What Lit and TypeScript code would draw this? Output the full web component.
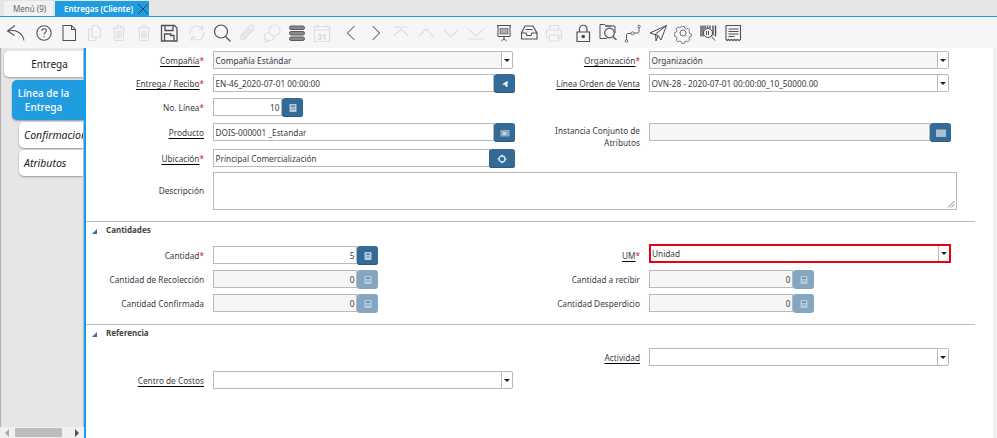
import { LitElement, html, css, svg } from "lit";
import { customElement } from "lit/decorators.js";

const ic = (c: string, body: unknown) => html`<span class="tb ${c}"><svg viewBox="0 0 24 24" width="24" height="24">${body}</svg></span>`;

const icons = {
  back: svg`<path d="M12 4.500L4.500 10l7 4.500M5 10c7-1.500 14.500 1 16 9.500"/>`,
  help: svg`<circle cx="12" cy="12" r="7.200"/><path d="M9.800 10c0-3 4.600-3 4.600-.2 0 2-2.400 1.800-2.400 3.800M12 15v1.200"/>`,
  nw: svg`<path d="M6 4.500h8.500l4 4V19.500H6zM14.500 4.500v4h4"/>`,
  copy: svg`<path d="M10 4.500h5l3.500 3.500v8H10zM10 8H6.500v11.500H14V16"/>`,
  del: svg`<path d="M7 7h10l-.8 12.500H7.800zM6 7h12M10 7V4.500h4V7M10 9.500v8M12 9.500v8M14 9.500v8"/>`,
  save: svg`<path d="M4.500 4.500h13l2.500 2.500v13H4.500zM8 4.500v5h8v-5M7.500 20v-7h7M13 14.500h4V20" stroke-width="1.300"/>`,
  refresh: svg`<path d="M5 13c-.5-5 3-8 7-8 2.500 0 4 1 5.500 2.500M17.500 4v4h-4M19 11c.5 5-3 8-7 8-2.500 0-4-1-5.500-2.500M6.500 20v-4h4"/>`,
  search: svg`<circle cx="11" cy="10.500" r="6.500" stroke-width="1.200"/><path d="M15.500 15.500l5 5" stroke-width="1.200"/>`,
  attach: svg`<path d="M18.500 8.500L10 17.500c-3 2.500-6-.5-3.500-3.500l8.500-9c2-2 5 .5 3 3l-8 8.500c-1 1-2.500-.3-1.500-1.500l7-7.500"/>`,
  chat: svg`<circle cx="14.500" cy="9.500" r="5.500"/><path d="M9 11.500c-5 0-6.500 6-2.500 7.500l-1 2 3-1.500c3 .5 5.500-1.500 5.500-4"/>`,
  menu: svg`<g fill="#8a8a8a" stroke="#5a5a5a" stroke-width="1"><rect x="4.500" y="5" width="15" height="3.500" rx="1.700"/><rect x="4.500" y="10.500" width="15" height="3.500" rx="1.700"/><rect x="4.500" y="16" width="15" height="3.500" rx="1.700"/></g>`,
  cal: svg`<path d="M4.500 5.500h15v15h-15zM4.500 9h15M8 3.500v3M16 3.500v3"/><text x="12" y="18.500" class="cal">31</text>`,
  prev: svg`<path d="M15.500 5L8.500 12l7 7"/>`,
  next: svg`<path d="M8.500 5l7 7-7 7"/>`,
  first: svg`<path d="M4.500 6h15M4.500 15L12 8l7.500 7"/>`,
  up: svg`<path d="M4.500 15.500L12 8l7.500 7.500"/>`,
  down: svg`<path d="M4.500 8.500L12 16l7.500-7.500"/>`,
  last: svg`<path d="M4.500 8L12 15l7.500-7M4.500 18h15"/>`,
  report: svg`<path d="M5 4.500h14M6 4.500V15.500h12V4.500M12 15.500v3M9.500 20l2.500-2 2.500 2" stroke-width="1"/><rect x="8" y="7.500" width="8" height="5.500" fill="#aaa" stroke-width=".6"/>`,
  archive: svg`<path d="M8 5h8l4 7v6H4.500v-6zM4.500 12H9l1 2.500h4l1-2.500h5M8.500 8.500h7" stroke-width="1.100"/>`,
  print: svg`<path d="M7.500 9V4.500h9V9M7.500 17H4.500V9h15v8h-3M7.500 14h9v6h-9z"/>`,
  lock: svg`<path d="M6 11h12.500v9.500H6z" stroke-width="1.200"/><path d="M8.500 11V8c0-5 7.500-5 7.500 0v3" stroke-width="1.200"/><circle cx="12.200" cy="15.500" r="1.300" fill="#333"/>`,
  zoom: svg`<path d="M15 5H10L8.500 3.500H4v14h7M9 5h10v7" stroke-width="1"/><circle cx="13.500" cy="12" r="4.800" stroke-width="1.200"/><path d="M17 15.500l3.500 3.500" stroke-width="1.200"/>`,
  flow: svg`<path d="M5.500 19v-5c0-1 .5-1.500 1.500-1.500h3M13 12h3c1.500 0 2-1 2-2V7" stroke-width=".9"/><circle cx="5.500" cy="20" r="1.300" stroke-width=".8"/><circle cx="11.500" cy="12.300" r="1.500" stroke-width=".8"/><circle cx="18" cy="5.500" r="1.300" stroke-width=".8"/>`,
  send: svg`<path d="M4 12L20.500 4.500 15 19l-3-4.500zM20.500 4.500L9.500 13 10 20l2-5.500" stroke-width="1"/>`,
  gear: svg`<circle cx="12" cy="12" r="3" stroke-width="1"/><path d="M10.500 4.500h3l.6 2 1.800.8 1.900-.9 2 2.100-.9 1.800.7 1.900 1.900.8v2.800l-1.900.7-.8 1.800.9 1.900-2 2-1.900-.9-1.800.8-.6 1.900h-3l-.6-1.900-1.800-.8-1.900.9-2-2 .9-1.900-.8-1.800-1.900-.7V11.600l1.900-.8.7-1.900-.9-1.800 2-2.100 1.900.9 1.800-.8z" transform="translate(1.700 1.700) scale(.86)" stroke-width="1"/>`,
  bar: svg`<path d="M5 4.500v11M7 4.500v11M9 4.500v4M11.500 4.500v3M14 4.500v3M17 4.500v10M19.500 4.500v11" stroke-width="1.400"/><circle cx="12" cy="12" r="4.500" stroke-width="1"/><path d="M10.500 10v4M12.500 10v4M15.500 15.500l3.500 4" stroke-width="1"/>`,
  doc: svg`<path d="M5 4.500h14.500v14l-1.500 1-1.500-1-1.500 1-1.500-1-1.500 1-1.500-1-1.500 1-1.500-1-1.500 1L5 18.500z" stroke-width="1.100"/><path d="M7.500 8h10M7.500 10.500h10M7.500 13h10M7.500 15.500h6" stroke-width="1"/>`,
};

const btnIcon = (k: string) => {
  if (k === "loc") return svg`<circle cx="7" cy="7" r="3" fill="none" stroke="#dfe8f0" stroke-width="1.300"/><path d="M7 2.500v2M7 9.500v2M2.500 7h2M9.500 7h2" stroke="#dfe8f0" stroke-width="1"/>`;
  if (k === "ret") return svg`<path d="M4 7.500L8 4.500h2.500L9.500 6.500V10H8L7 8z" fill="#eef3f7"/>`;
  if (k === "prod") return svg`<rect x="2.500" y="4" width="9" height="6.500" fill="#8fabc3"/><rect x="5" y="6" width="3" height="3" fill="#c9d7e3"/>`;
  if (k === "attr") return svg`<rect x="2" y="3.500" width="10" height="7.500" fill="#a8bfd2"/>`;
  return svg`<rect x="3.500" y="3" width="7" height="8" rx=".8" fill="#b9cad8"/><rect x="5" y="4.500" width="4" height="1.300" fill="#4b7ba3"/><rect x="5" y="7.500" width="4" height="1" fill="#7f9fbb"/>`;
};

@customElement("app-root")
export class AppRoot extends LitElement {
  static styles = css`
    :host { display: block; width: 997px; height: 438px; overflow: hidden; background: #fff;
      font-family: "Noto Sans", "Open Sans", sans-serif; font-size: 8.250px; color: #3b3b45; }
    * { box-sizing: border-box; }
    .tabs { height: 17px; background: #e5e5e5; border-bottom: 1px solid #1a9be0; display: flex; padding: 1px 0 0 4px; gap: 2px; }
    .tab { height: 15px; display: flex; align-items: center; font-size: 8px; white-space: nowrap; }
    .tab.menu { width: 49px; background: #f1f1f1; color: #666; padding-left: 9px; }
    .tab.on { width: 94px; background: #1f9de0; color: #fff; font-weight: 600; padding-left: 9px; justify-content: space-between; }
    .tab.on svg { display: block; }
    .toolbar { height: 31px; background: #f6f6f6; display: flex; align-items: center; padding: 0 0 0 2.500px; gap: 3.500px; }
    .grp { display: flex; }
    .tb { width: 25px; height: 24px; display: flex; justify-content: center; }
    .tb svg { fill: none; stroke: #505050; stroke-width: 1.050; overflow: visible; }
    .tb.off svg { stroke: #dedede; stroke-width: 1.200; }
    .tb.mid svg { stroke: #6a6a6a; }
    .cal { font-size: 8px; font-weight: 700; fill: #d8d8d8; stroke: none; text-anchor: middle; font-family: "Noto Sans", sans-serif; }
    .body { display: flex; height: 390px; }
    .side { width: 86px; flex: none; background: #e6e6e6; border-right: 2px solid #12a0ea; display: flex; flex-direction: column;
      box-shadow: inset 2px 0 1px -1px #aaa, inset -2px 0 1px -1px #bbb; }
    .stabs { flex: 1; display: flex; flex-direction: column; padding-top: 3px; overflow: hidden; }
    .st { background: #fff; border-radius: 5px 0 0 5px; box-shadow: 0 1px 2px #999; overflow: hidden; white-space: nowrap; }
    .st.a { margin: 0 0 0 4px; width: 79px; height: 26px; font-size: 10px; line-height: 26px; text-align: center; padding-left: 12px; color: #222; }
    .st.b { margin: 3px 0 0 12px; width: 72px; height: 40px; padding: 6px 9px 0 0; font-size: 10px; line-height: 14px; text-align: center; background: #1f9de0; color: #fff; font-weight: 500; }
    .st.c { margin: 2px 0 0 19px; width: 64px; height: 26px; font-size: 10.500px; line-height: 26px; font-style: italic; padding-left: 5px; color: #222; }
    .sbar { height: 11px; background: #f0f0f0; display: flex; align-items: center; padding-left: 15px; }
    .thumb { width: 47px; height: 9px; background: #bdbdbd; }
    .arr { width: 0; height: 0; border-style: solid; border-color: transparent; border-width: 4px; }
    .arr.l { border-right-color: #aaa; border-left-width: 0; margin-left: -10px; margin-right: 6px; }
    .arr.r { border-left-color: #555; border-right-width: 0; margin-left: 13px; }
    .main { flex: 1; display: flex; }
    .content { width: 907px; flex: none; padding-top: 3px; }
    .vbar { flex: 1; background: #f1f1f1; }
    .grid { display: grid; grid-template-columns: 118px 300px 118px 300px; column-gap: 9px; align-items: start; }
    .g1 { grid-template-rows: 18px 19px 20px 21px 18px 38px; row-gap: 5px; }
    .g2 { grid-template-rows: 19px 19px 18px; row-gap: 5px; }
    .g3 { grid-template-rows: 18px 18px; row-gap: 5px; }
    .lb { text-align: right; line-height: 20px; white-space: nowrap; }
    .lb u { text-decoration-color: #000; text-underline-offset: 1.500px; }
    .lb i { color: #e0102a; font-style: normal; }
    .lb.two { line-height: 11.500px; padding-top: 2px; }
    .lb.tall { line-height: 38px; }
    .ctl { display: flex; height: 18px; }
    .inp { flex: 1; min-width: 0; height: 18px; border: 1px solid #b9b9b9; padding: 0 1.500px; line-height: 18px; background: #fff; white-space: nowrap; overflow: hidden; color: #3b3b45; }
    .inp.ro { background: #f6f6f6; }
    .inp.num { text-align: right; }
    .sel { width: 12px; height: 18px; border: 1px solid #b9b9b9; margin-left: -1px; background: #fff; display: flex; align-items: center; justify-content: center; border-radius: 0 2px 2px 0; }
    .sel b { width: 0; height: 0; border: 3px solid transparent; border-top: 3px solid #222; border-bottom: 0; }
    .btn { height: 19px; background: #336a98; border-radius: 3px; display: flex; align-items: center; justify-content: center; width: 21px; flex: none; box-shadow: inset 0 -1px 0 #2a5a83; }
    .btn.off { background: #84a6c2; box-shadow: none; }
    .btn.wide { width: 26px; margin-left: -1px; }
    .w90 { width: 90px; }
    .w165 { width: 165px; }
    .w302 { width: 302px; }
    .ta { width: 744px; height: 38px; border: 1px solid #b9b9b9; grid-column: 2 / 5; position: relative; }
    .ta svg { position: absolute; right: 1px; bottom: 1px; }
    .sec { width: 889px; border-top: 1px solid #bdbdbd; }
    .s1 { margin-top: 11px; padding-bottom: 12px; }
    .hd { display: flex; align-items: center; gap: 9px; padding-left: 6px; font-weight: 700; font-size: 8px; color: #444; height: 14px; margin-bottom: 10px; }
    .s2 .hd { margin-bottom: 9px; }
    .tri { width: 0; height: 0; border-style: solid; border-width: 0 0 5px 5px; border-color: transparent transparent #2b6ea8 transparent; margin-top: 5px; }
    .um { border: 2px solid #e60012; width: 302px; height: 18.500px; display: flex; margin-top: -2px; }
    .um .inp { border: 0; line-height: 16px; height: 15px; padding-left: 1px; }
    .um .sel { border: 0; border-left: 1px solid #b9b9b9; height: 15px; margin: 0; width: 11px; }
  `;

  private lab(t: string, u = false, req = false, extra = "") {
    return html`<div class="lb ${extra}">${u ? html`<u>${t}</u>` : t}${req ? html`<i>*</i>` : ""}</div>`;
  }
  private sel(t: string, ro = false) {
    return html`<div class="ctl"><div class="inp ${ro ? "ro" : ""}">${t}</div><div class="sel"><b></b></div></div>`;
  }
  private bicon(k: string) {
    return html`<svg viewBox="0 0 14 14" width="14" height="14">${btnIcon(k)}</svg>`;
  }
  private txtBtn(t: string, k: string, extra = "") {
    return html`<div class="ctl w302"><div class="inp">${t}</div><div class="btn ${extra}">${this.bicon(k)}</div></div>`;
  }
  private num(v: string, ro = false, w = "w165") {
    return html`<div class="ctl ${w}"><div class="inp num ${ro ? "ro" : ""}">${v}</div><div class="btn ${ro ? "off" : ""}">${this.bicon("calc")}</div></div>`;
  }

  render() {
    const i = icons;
    return html`
      <div class="tabs">
        <div class="tab menu">Menú (9)</div>
        <div class="tab on">Entregas (Cliente)
          <svg viewBox="0 0 12 12" width="12" height="12"><path d="M1 1l10 10M11 1L1 11" stroke="#24435c" stroke-width="1" fill="none"/></svg>
        </div>
      </div>
      <div class="toolbar">
        <div class="grp">${ic("", i.back)}</div>
        <div class="grp">${ic("", i.help)}${ic("", i.nw)}${ic("off", i.copy)}${ic("off", i.del)}${ic("off", i.del)}${ic("", i.save)}</div>
        <div class="grp">${ic("off", i.refresh)}${ic("", i.search)}${ic("off", i.attach)}${ic("off", i.chat)}${ic("", i.menu)}${ic("off", i.cal)}</div>
        <div class="grp">${ic("mid", i.prev)}${ic("mid", i.next)}${ic("off", i.first)}${ic("off", i.up)}${ic("off", i.down)}${ic("off", i.last)}</div>
        <div class="grp">${ic("", i.report)}${ic("", i.archive)}${ic("off", i.print)}</div>
        <div class="grp">${ic("", i.lock)}${ic("", i.zoom)}${ic("", i.flow)}${ic("", i.send)}${ic("mid", i.gear)}${ic("", i.bar)}${ic("", i.doc)}</div>
      </div>
      <div class="body">
        <div class="side">
          <div class="stabs">
            <div class="st a">Entrega</div>
            <div class="st b">Línea de la<br />Entrega</div>
            <div class="st c">Confirmaciones</div>
            <div class="st c">Atributos</div>
          </div>
          <div class="sbar"><span class="arr l"></span><div class="thumb"></div><span class="arr r"></span></div>
        </div>
        <div class="main">
          <div class="content">
            <div class="grid g1">
              ${this.lab("Compañía", true, true)}${this.sel("Compañía Estándar", true)}
              ${this.lab("Organización", true, true)}${this.sel("Organización", true)}
              ${this.lab("Entrega / Recibo", true, true)}${this.txtBtn("EN-46_2020-07-01 00:00:00", "ret")}
              ${this.lab("Línea Orden de Venta", true)}${this.sel("OVN-28 - 2020-07-01 00:00:00_10_50000.00")}
              ${this.lab("No. Línea", false, true)}${this.num("10", false, "w90")}<div></div><div></div>
              ${this.lab("Producto", true)}${this.txtBtn("DOIS-000001 _Estandar", "prod")}
              <div class="lb two">Instancia Conjunto de<br />Atributos</div>
              <div class="ctl w302"><div class="inp ro"></div><div class="btn">${this.bicon("attr")}</div></div>
              ${this.lab("Ubicación", true, true)}${this.txtBtn("Principal Comercialización", "loc", "wide")}<div></div><div></div>
              ${this.lab("Descripción", false, false, "tall")}
              <div class="ta"><svg viewBox="0 0 8 8" width="8" height="8"><path d="M1 7.500L7.500 1M4 7.500L7.500 4" stroke="#666" stroke-width=".8"/></svg></div>
            </div>
            <div class="sec s1">
              <div class="hd"><span class="tri"></span>Cantidades</div>
              <div class="grid g2">
                ${this.lab("Cantidad", false, true)}${this.num("5")}
                ${this.lab("UM", true, true)}
                <div class="um"><div class="inp">Unidad</div><div class="sel"><b></b></div></div>
                ${this.lab("Cantidad de Recolección")}${this.num("0", true)}
                ${this.lab("Cantidad a recibir")}${this.num("0", true)}
                ${this.lab("Cantidad Confirmada")}${this.num("0", true)}
                ${this.lab("Cantidad Desperdicio")}${this.num("0", true)}
              </div>
            </div>
            <div class="sec s2">
              <div class="hd"><span class="tri"></span>Referencia</div>
              <div class="grid g3">
                <div></div><div></div>
                ${this.lab("Actividad", true)}${this.sel("")}
                ${this.lab("Centro de Costos", true)}${this.sel("")}
              </div>
            </div>
          </div>
          <div class="vbar"></div>
        </div>
      </div>
    `;
  }
}
